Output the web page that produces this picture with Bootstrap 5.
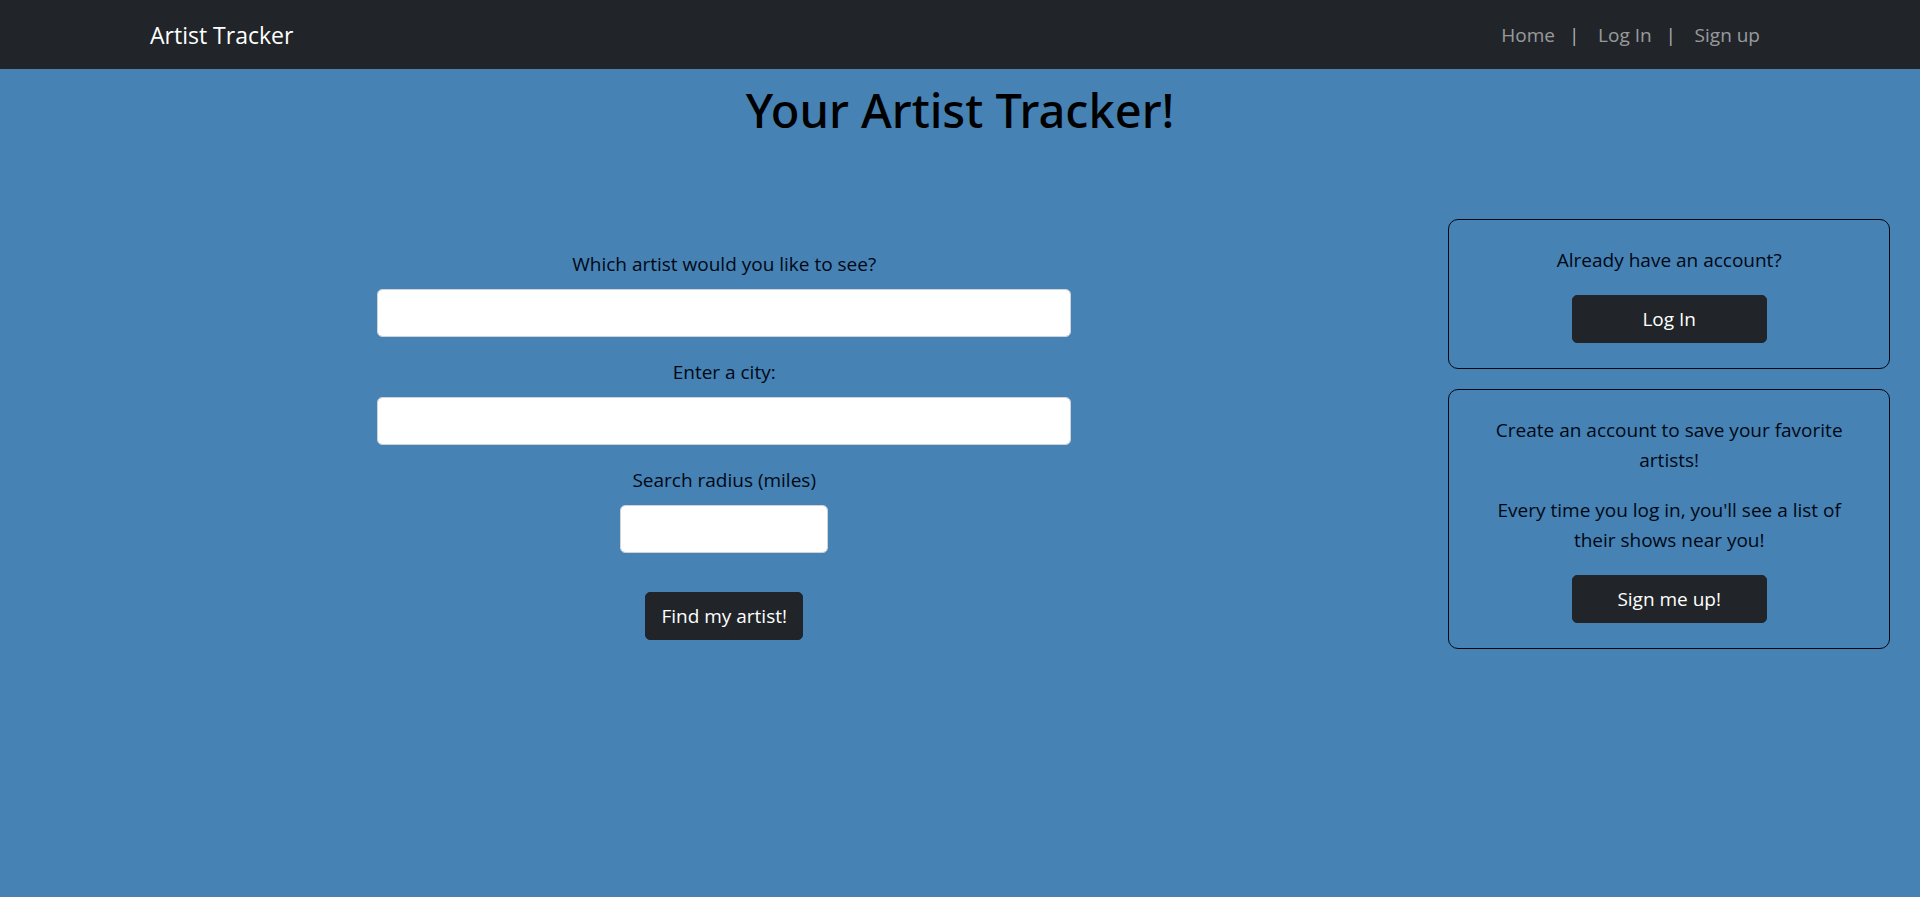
<!DOCTYPE html>
<html lang="en">
<head>
<meta charset="utf-8">
<meta name="viewport" content="width=device-width, initial-scale=1">
<title>Artist Tracker</title>
<link href="https://cdn.jsdelivr.net/npm/bootstrap@5.3.0/dist/css/bootstrap.min.css" rel="stylesheet">
<style>
  html { font-size: 20px; }
  body {
    background: #4682b4;
    color: #000814;
    font-family: "Open Sans", "Noto Sans", sans-serif;
    font-size: 19px;
    line-height: 30px;
  }

  .site-nav { min-height: 69px; padding: 0; }
  .site-nav .container { max-width: 1650px; }
  .site-nav .navbar-brand { font-size: 23px; line-height: 36px; padding: 0; }
  .site-nav .nav-link { padding: 8px 10px; color: rgba(255, 255, 255, .55); }
  .site-nav .nav-link:hover { color: #fff; }
  .nav-divider { width: 23px; padding-left: 4px; color: rgba(255, 255, 255, .65); }

  .page-title { color: #000; font-family: "Noto Sans", "Open Sans", sans-serif; font-size: 47px; line-height: 60px; font-weight: 500; margin: 11px 0 79px; }

  .search-column { padding: 30px 30px 0; }
  .search-column .form-label { display: block; margin: 0 0 10px; }
  .field-group { margin-bottom: 20px; }
  .field-group + .btn { margin-top: 19px; }
  .radius-field { width: 30%; }

  .account-column { flex: 0 0 23%; margin-right: 30px; }
  .account-box { border: 1px solid #000814; border-radius: 10px; padding: 25px; }
  .account-box + .account-box { margin-top: 20px; }
  .account-box p { margin-bottom: 20px; }

  .btn, .form-control { font-size: 19px; line-height: 30px; padding: 8px 15px; border-radius: 5px; }
  .form-control { border-color: #ced4da; }
  .btn-site { background: #212529; border-color: #212529; color: #fff; }
  .btn-site:hover { background: #424649; color: #fff; }
</style>
</head>
<body>
<nav class="navbar navbar-dark bg-dark site-nav">
  <div class="container">
    <a class="navbar-brand" href="#">Artist Tracker</a>
    <div class="navbar-nav flex-row align-items-center">
      <a class="nav-link" href="#">Home</a>
      <span class="nav-divider">|</span>
      <a class="nav-link" href="#">Log In</a>
      <span class="nav-divider">|</span>
      <a class="nav-link" href="#">Sign up</a>
    </div>
  </div>
</nav>
<main>
  <h1 class="page-title text-center">Your Artist Tracker!</h1>
  <div class="d-flex align-items-start text-center">
    <section class="flex-grow-1 search-column">
      <form class="w-50 mx-auto">
        <div class="field-group">
          <label class="form-label" for="artist">Which artist would you like to see?</label>
          <input class="form-control" id="artist" type="text">
        </div>
        <div class="field-group">
          <label class="form-label" for="city">Enter a city:</label>
          <input class="form-control" id="city" type="text">
        </div>
        <div class="field-group">
          <label class="form-label" for="radius">Search radius (miles)</label>
          <input class="form-control radius-field mx-auto" id="radius" type="text">
        </div>
        <button class="btn btn-site" type="submit">Find my artist!</button>
      </form>
    </section>
    <aside class="account-column">
      <div class="account-box">
        <p>Already have an account?</p>
        <button class="btn btn-site w-50" type="button">Log In</button>
      </div>
      <div class="account-box">
        <p>Create an account to save your favorite artists!</p>
        <p>Every time you log in, you'll see a list of their shows near you!</p>
        <button class="btn btn-site w-50" type="button">Sign me up!</button>
      </div>
    </aside>
  </div>
</main>
<script src="https://cdn.jsdelivr.net/npm/bootstrap@5.3.0/dist/js/bootstrap.bundle.min.js"></script>
</body>
</html>
